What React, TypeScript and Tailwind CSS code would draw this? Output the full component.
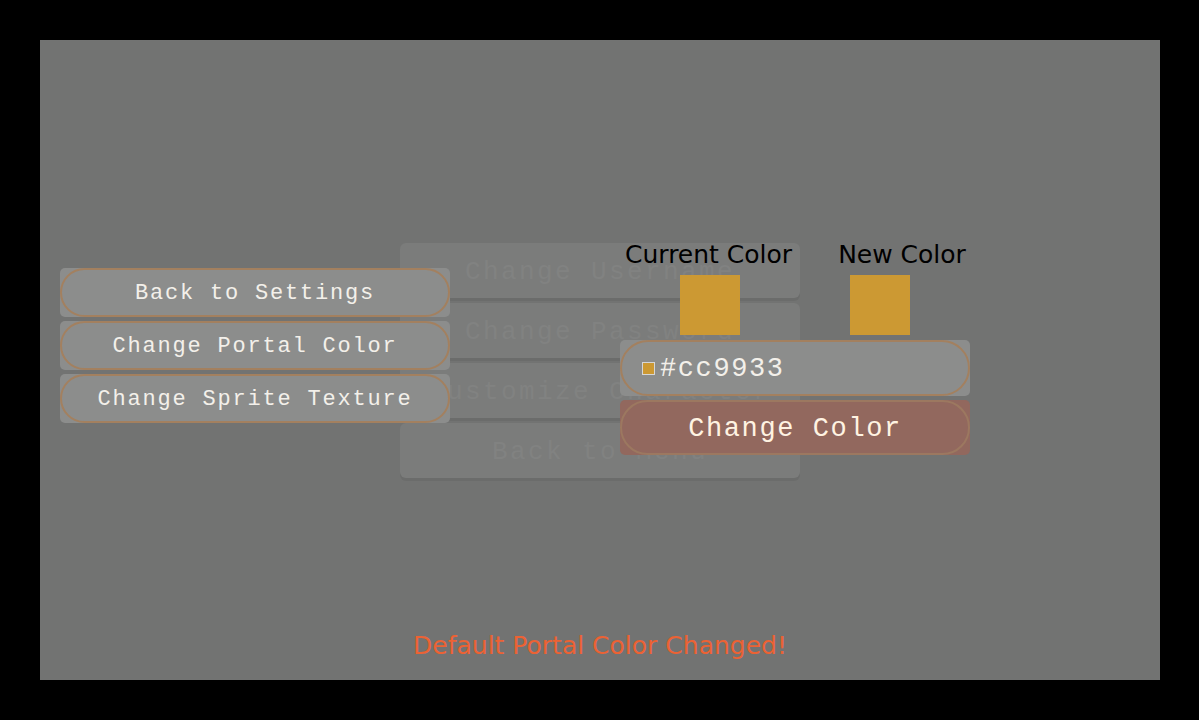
import React from 'react'

const mono = { fontFamily: '"Liberation Mono", "DejaVu Sans Mono", monospace' }
const sans = { fontFamily: '"DejaVu Sans", Verdana, sans-serif' }

function SideButton({ label }: { label: string }) {
  return (
    <div className="h-[49px] w-[390px] rounded-[5px] bg-[#8c8d8c]">
      <div className="flex h-full w-full items-center justify-center rounded-full border-2 border-[#a3805f] pt-[2px]">
        <span className="text-[22px] leading-none tracking-[1.8px] text-[#f3f0ea]">{label}</span>
      </div>
    </div>
  )
}

function FadedButton({ label }: { label: string }) {
  return (
    <div className="flex h-[55px] w-[400px] items-center justify-center rounded-[6px] bg-[#7b7c7b] pt-[2px] shadow-[0_3px_0_rgba(0,0,0,0.06)]">
      <span className="text-[26px] leading-none tracking-[2.4px] text-[#818281]">{label}</span>
    </div>
  )
}

export default function App() {
  return (
    <div className="h-[720px] w-[1199px] bg-black p-10" style={mono}>
      <div className="relative h-[640px] w-[1120px] overflow-hidden bg-[#727372]">
        {/* menu behind the overlay */}
        <div className="ml-[360px] flex w-[400px] flex-col gap-[5px] pt-[203px]">
          <FadedButton label="Change Username" />
          <FadedButton label="Change Password" />
          <FadedButton label="Customize Character" />
          <FadedButton label="Back to Menu" />
        </div>

        {/* settings sub menu */}
        <div className="absolute left-[20px] top-[228px] flex flex-col gap-[4px]">
          <SideButton label="Back to Settings" />
          <SideButton label="Change Portal Color" />
          <SideButton label="Change Sprite Texture" />
        </div>

        {/* color picker */}
        <div className="absolute left-[580px] top-[201px] w-[350px]">
          <div className="flex text-[25px] leading-[28px] text-black" style={sans}>
            <span className="ml-[5px]">Current Color</span>
            <span className="ml-[46px]">New Color</span>
          </div>
          <div className="mt-[6px] flex">
            <div className="ml-[60px] h-[60px] w-[60px] bg-[#cc9933]" />
            <div className="ml-[110px] h-[60px] w-[60px] bg-[#cc9933]" />
          </div>
          <div className="mt-[5px] h-[56px] w-[350px] rounded-[5px] bg-[#8c8d8c]">
            <div className="flex h-full w-full items-center rounded-full border-2 border-[#a3805f] pl-[20px]">
              <div className="h-[13px] w-[13px] border border-[#d6d6d6] bg-[#cc9933]" />
              <span className="ml-[5px] pt-[2px] text-[27px] leading-none tracking-[1.6px] text-[#f3f0ea]">#cc9933</span>
            </div>
          </div>
          <div className="mt-[4px] h-[55px] w-[350px] rounded-[5px] bg-[#92685e]">
            <div className="flex h-full w-full items-center justify-center rounded-full border-2 border-[#9c7860] pt-[4px]">
              <span className="text-[27px] leading-none tracking-[1.6px] text-[#fff3e2]">Change Color</span>
            </div>
          </div>
        </div>

        <div
          className="absolute bottom-[20px] left-0 right-0 text-center text-[25px] leading-[28px] text-[#ec6234]"
          style={sans}
        >
          Default Portal Color Changed!
        </div>
      </div>
    </div>
  )
}
